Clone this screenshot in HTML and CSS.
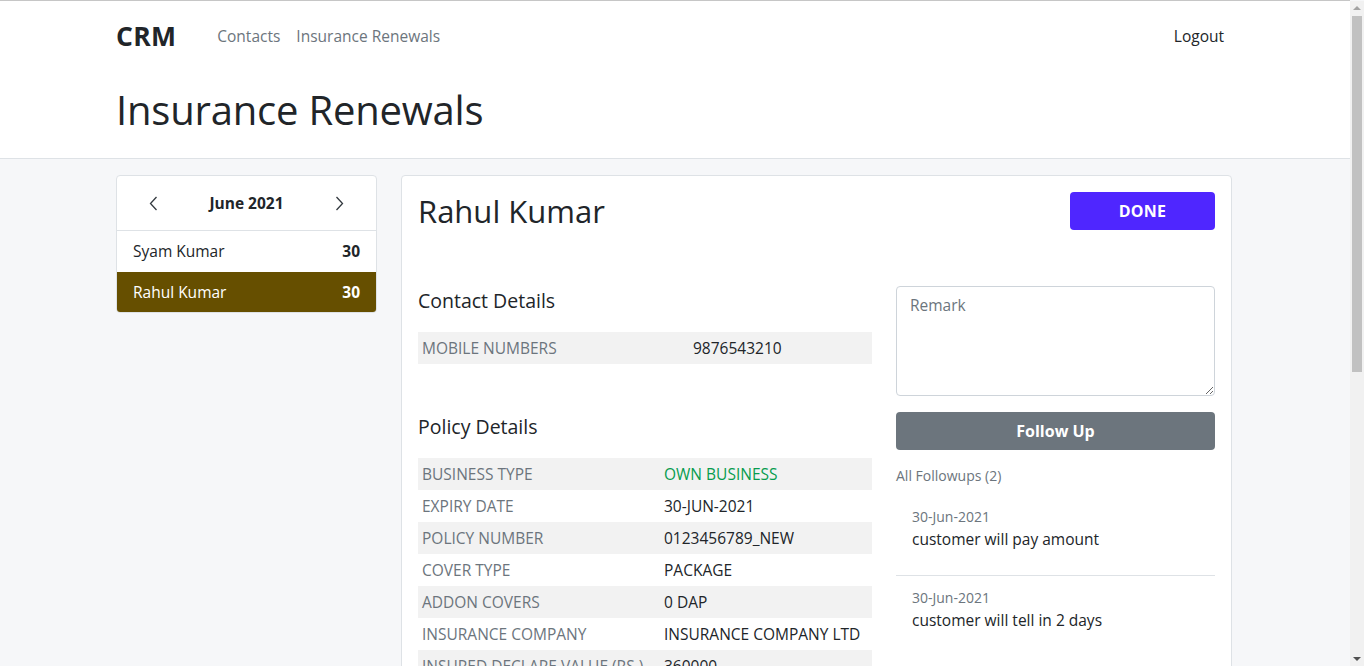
FILE: index.html
```html
<!DOCTYPE html>
<html lang="en">
<head>
<meta charset="utf-8">
<title>Insurance Renewals</title>
<link rel="stylesheet" href="styles.css">
</head>
<body>
<header class="topbar">
  <div class="container">
    <nav class="navbar">
      <a class="brand" href="#">CRM</a>
      <ul class="nav-links">
        <li><a href="#">Contacts</a></li>
        <li><a href="#">Insurance Renewals</a></li>
      </ul>
      <a class="logout" href="#">Logout</a>
    </nav>
    <h1 class="page-title">Insurance Renewals</h1>
  </div>
</header>
<main class="main">
  <div class="container layout">
    <aside class="side-card">
      <div class="month-bar">
        <button class="chev" aria-label="Previous month"><svg width="9" height="15" viewBox="0 0 9 15"><polyline points="7.5,1 1.5,7.5 7.5,14" fill="none" stroke="#343a40" stroke-width="1.3"/></svg></button>
        <span class="month">June 2021</span>
        <button class="chev" aria-label="Next month"><svg width="9" height="15" viewBox="0 0 9 15"><polyline points="1.5,1 7.5,7.5 1.5,14" fill="none" stroke="#343a40" stroke-width="1.3"/></svg></button>
      </div>
      <ul class="people">
        <li class="person"><span>Syam Kumar</span><b>30</b></li>
        <li class="person active"><span>Rahul Kumar</span><b>30</b></li>
      </ul>
    </aside>
    <section class="detail-card">
      <div class="detail-head">
        <h2 class="name">Rahul Kumar</h2>
        <button class="btn-done">DONE</button>
      </div>
      <div class="detail-body">
        <div class="info-col">
          <h5 class="section-title">Contact Details</h5>
          <table class="info-table contact-table">
            <tr><th>MOBILE NUMBERS</th><td>9876543210</td></tr>
          </table>
          <h5 class="section-title policy-title">Policy Details</h5>
          <table class="info-table policy-table">
            <tr><th>BUSINESS TYPE</th><td class="green">OWN BUSINESS</td></tr>
            <tr><th>EXPIRY DATE</th><td>30-JUN-2021</td></tr>
            <tr><th>POLICY NUMBER</th><td>0123456789_NEW</td></tr>
            <tr><th>COVER TYPE</th><td>PACKAGE</td></tr>
            <tr><th>ADDON COVERS</th><td>0 DAP</td></tr>
            <tr><th>INSURANCE COMPANY</th><td>INSURANCE COMPANY LTD</td></tr>
            <tr><th>INSURED DECLARE VALUE (RS.)</th><td>360000</td></tr>
          </table>
        </div>
        <div class="followup-col">
          <textarea class="remark" placeholder="Remark"></textarea>
          <button class="btn-follow">Follow Up</button>
          <div class="fu-label">All Followups (2)</div>
          <ul class="fu-list">
            <li class="fu-item"><div class="fu-date">30-Jun-2021</div><p class="fu-text">customer will pay amount</p></li>
            <li class="fu-item"><div class="fu-date">30-Jun-2021</div><p class="fu-text">customer will tell in 2 days</p></li>
          </ul>
        </div>
      </div>
    </section>
  </div>
</main>
<div class="scrollbar" aria-hidden="true">
  <span class="sb-arrow sb-up"></span>
  <span class="sb-thumb"></span>
  <span class="sb-arrow sb-down"></span>
</div>
</body>
</html>
```
FILE: styles.css
```css
* { box-sizing: border-box; }
html, body { margin: 0; padding: 0; }
body {
  font-family: "Open Sans", "Noto Sans", sans-serif;
  font-size: 15.5px;
  color: #212529;
  background: #f6f7f9;
  border-top: 1px solid #c6c6c6;
  margin-right: 14px;
}
a { text-decoration: none; color: inherit; }
ul { list-style: none; margin: 0; padding: 0; }

.container { width: 1118px; padding-right: 2px; margin: 0 auto; }

.topbar {
  background: #fff;
  border-bottom: 1px solid #dee2e6;
}
.navbar {
  height: 70px;
  display: flex;
  align-items: center;
}
.brand {
  font-size: 26.5px;
  font-weight: 700;
  color: #212529;
  margin-right: 33px;
  letter-spacing: 0.3px;
}
.nav-links { display: flex; flex: 1; }
.nav-links a { display: block; padding: 8px; color: #6c757d; }
.logout { padding: 8px; color: #212529; }

.page-title {
  margin: 15px 0 0;
  padding-bottom: 24px;
  font-size: 40px;
  font-weight: 400;
  line-height: 48px;
  letter-spacing: -0.2px;
}

.main { padding: 16px 0 0; }
.layout {
  display: grid;
  grid-template-columns: 261px 1fr;
  gap: 24px;
  align-items: start;
}

.side-card {
  background: #fff;
  border: 1px solid #dee2e6;
  border-radius: 4px;
  overflow: hidden;
}
.month-bar {
  height: 55px;
  display: flex;
  align-items: center;
  justify-content: space-between;
  padding: 0 32px;
  border-bottom: 1px solid #dee2e6;
}
.chev {
  border: 0;
  background: none;
  padding: 0;
  display: flex;
  cursor: pointer;
}
.month { font-weight: 700; font-size: 15.5px; }
.person {
  display: flex;
  justify-content: space-between;
  align-items: center;
  height: 40.5px;
  padding: 0 16px;
}
.person b { font-weight: 700; }
.person.active { background: #664f00; color: #fff; }

.detail-card {
  background: #fff;
  border: 1px solid #dee2e6;
  border-radius: 4px 4px 0 0;
  padding: 16px 16px 24px;
}
.detail-head {
  display: flex;
  justify-content: space-between;
  align-items: center;
  height: 38px;
}
.name { margin: 0; font-size: 31px; font-weight: 400; }
.btn-done {
  width: 145px;
  height: 38px;
  border: 0;
  border-radius: 4px;
  background: #4f26ff;
  color: #fff;
  font-family: inherit;
  font-size: 16px;
  font-weight: 700;
  letter-spacing: 0.3px;
}

.detail-body {
  margin-top: 56px;
  display: grid;
  grid-template-columns: 454px 1fr;
  gap: 24px;
}
.section-title {
  margin: 0 0 16px;
  font-size: 19.5px;
  font-weight: 400;
  line-height: 30px;
}
.policy-title { margin-top: 48px; }
.info-table { width: 100%; border-collapse: collapse; }
.info-table tr:nth-child(odd) { background: #f2f2f2; }
.info-table th, .info-table td {
  height: 32px;
  padding: 0 4px;
  text-align: left;
  font-weight: 400;
  white-space: nowrap;
}
.info-table th { color: #6c757d; }
.contact-table th { width: 271px; }
.policy-table th { width: 242px; }
.green { color: #079c4f; }

.remark {
  display: block;
  width: 100%;
  height: 110px;
  padding: 6px 13px;
  border: 1px solid #ced4da;
  border-radius: 4px;
  font-family: inherit;
  font-size: 15.5px;
  line-height: 24px;
  color: #212529;
  resize: vertical;
}
.remark::placeholder { color: #6c757d; }
.btn-follow {
  display: block;
  width: 100%;
  height: 38px;
  margin-top: 16px;
  border: 0;
  border-radius: 4px;
  background: #6c757d;
  color: #fff;
  font-family: inherit;
  font-size: 16px;
  font-weight: 700;
}
.fu-label {
  margin-top: 16px;
  font-size: 14px;
  line-height: 20px;
  color: #6c757d;
}
.fu-list { margin-top: 9px; }
.fu-item { padding: 11px 16px 8px; border-bottom: 1px solid #dee2e6; }
.fu-item:last-child { border-bottom: 0; }
.fu-date { font-size: 14px; line-height: 21px; color: #6c757d; }
.fu-text { margin: 0 0 16px; line-height: 24px; }

/* decorative stand-in for the browser's vertical scrollbar */
.scrollbar {
  position: fixed;
  top: 1px;
  right: 0;
  bottom: 0;
  width: 14px;
  background: #f1f1f1;
  display: flex;
  flex-direction: column;
  align-items: center;
}
.sb-arrow {
  width: 0;
  height: 0;
  border-left: 4px solid transparent;
  border-right: 4px solid transparent;
}
.sb-up { margin-top: 5px; border-bottom: 4px solid #a3a3a3; }
.sb-down { margin-top: auto; margin-bottom: 5px; border-top: 4px solid #505050; }
.sb-thumb {
  width: 10px;
  height: 356px;
  margin-top: 6px;
  background: #c1c1c1;
}
```
